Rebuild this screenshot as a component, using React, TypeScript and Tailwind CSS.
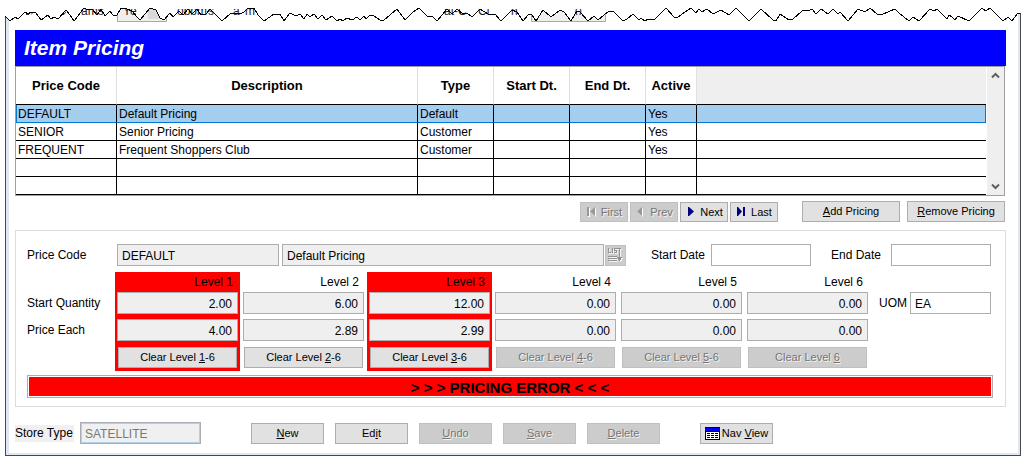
import React from "react";

const TEAR =
  "5,16 10,21 15,17 18,19 25,12 28,14 31,12 36,13 41,20 44,18 48,15 51,19 54,17 58,19 66,10 70,15 74,21 84,8 88,10 92,9 97,15 101,9 105,16 110,11 113,15 117,15 121,8 127,9 132,11 137,17 140,20 150,8 156,10 160,18 164,20 170,13 173,17 179,11 183,15 188,9 192,14 197,9 201,15 206,14 210,9 214,13 218,17 222,21 230,14 235,13 240,14 244,12 248,8 254,8 258,15 264,21 274,14 280,14 284,21 290,13 296,16 300,14 304,19 307,14 310,17 314,14 318,19 322,15 326,20 332,16 337,21 340,19 343,21 347,18 352,20 357,17 360,20 364,16 366,19 370,15 374,16 380,20 384,20 397,9 405,20 413,12 419,8 427,16 432,16 437,21 447,9 452,14 457,9 463,14 467,13 472,17 480,9 488,14 495,14 501,21 506,16 512,10 517,12 523,21 529,14 532,15 536,21 543,10 551,17 560,10 564,12 571,21 577,11 580,12 588,21 594,16 598,20 609,11 614,12 623,21 627,19 633,14 639,20 641,18 645,21 648,19 655,19 666,8 674,17 678,17 685,12 691,8 696,13 699,9 702,12 707,9 713,14 721,10 729,15 736,8 749,21 761,9 773,20 776,21 780,14 789,20 793,19 802,11 810,10 812,9 816,14 821,9 828,14 833,9 838,14 840,12 848,21 858,9 865,12 870,8 877,14 881,15 890,11 895,9 899,13 909,21 913,17 919,21 930,9 934,11 937,9 947,19 949,15 952,17 955,20 958,16 969,21 982,8 986,11 990,8 1003,21 1008,17 1012,21 1018,13 1020,13";

function TornEdge() {
  return (
    <svg viewBox="0 0 1029 22" preserveAspectRatio="none" className="block h-[22px] w-full" aria-hidden="true">
      <rect x="5" y="15" width="1" height="7" fill="#484848" />
      <rect x="6" y="15" width="3" height="7" fill="#dfe3f2" />
      <rect x="1018" y="13" width="2" height="9" fill="#dfe8f4" />
      <rect x="1020" y="13" width="1" height="9" fill="#484848" />
      <path d="M117.500 5V21.500H166.500V5" fill="#efefef" stroke="#a8a8ac" />
      <rect x="148" y="5" width="12" height="14" fill="#d9d9d9" />
      <g stroke="#333" fill="none">
        <path d="M26 14.500h3M31 14.500l3-3M61 14.500h3M64 14.500l2-3" />
      </g>
      <path d="M531.500 5V21.500H605.500V5" fill="#efefef" stroke="#a8a8ac" />
      <polygon points={`0,0 0,16 ${TEAR} 1020,0`} fill="#fff" />
      <g fontSize="12" fill="#222" clipPath="url(#fragments)">
        <text x="81" y="15">ams</text>
        <text x="123" y="15">Ye</text>
        <text x="177" y="15">oppm</text>
        <text x="208" y="15">s</text>
        <text x="233" y="15">a</text>
        <text x="245" y="15">m</text>
        <text x="444" y="15">at-C</text>
        <text x="478" y="15">Cl</text>
        <text x="511" y="15">n</text>
        <text x="575" y="16">0</text>
      </g>
      <clipPath id="fragments">
        <rect x="0" y="9" width="1029" height="6" />
      </clipPath>
      <polyline points={TEAR} fill="none" stroke="#000" strokeWidth="1" shapeRendering="crispEdges" />
    </svg>
  );
}

const rows = [
  ["DEFAULT", "Default Pricing", "Default", "", "", "Yes"],
  ["SENIOR", "Senior Pricing", "Customer", "", "", "Yes"],
  ["FREQUENT", "Frequent Shoppers Club", "Customer", "", "", "Yes"],
  ["", "", "", "", "", ""],
  ["", "", "", "", "", ""],
];

const headings = ["Price Code", "Description", "Type", "Start Dt.", "End Dt.", "Active"];

function Chevron({ down = false }: { down?: boolean }) {
  return (
    <svg width="9" height="7" viewBox="0 0 9 7" fill="none" stroke="#606060" strokeWidth="2" aria-hidden="true">
      <path d={down ? "M1 1.500L4.500 5L8 1.500" : "M1 5.500L4.500 2L8 5.500"} />
    </svg>
  );
}

function PricingTable() {
  return (
    <div className="mr-px flex border border-[#a0a0a0]">
      <table className="min-w-0 flex-1 table-fixed border-separate border-spacing-0 text-[12px] leading-4">
        <colgroup>
          <col className="w-[101px]" />
          <col className="w-[301px]" />
          <col className="w-[76px]" />
          <col className="w-[76px]" />
          <col className="w-[76px]" />
          <col className="w-[51px]" />
          <col />
        </colgroup>
        <thead>
          <tr className="h-[38px] text-[13px]">
            {headings.map((h) => (
              <th key={h} scope="col" className="border-r border-b border-r-[#e0e0e0] border-b-black p-0 text-center font-bold">
                {h}
              </th>
            ))}
            <td className="border-b border-black bg-[#efefef] p-0" />
          </tr>
        </thead>
        <tbody>
          {rows.map((r, i) => (
            <tr key={i} className={i === 0 ? "h-[18px] bg-[#a5cded]" : "h-[18px]"}>
              {r.map((c, j) => (
                <td
                  key={j}
                  className={
                    "border-r border-b border-r-black p-0 pt-px pl-[2px] whitespace-nowrap " +
                    (i === 0 ? "border-b-[#0078d7] first:border-l first:border-l-[#0078d7] first:pl-px" : "border-b-black")
                  }
                >
                  {c}
                </td>
              ))}
              <td className={i === 0 ? "border-r border-b border-[#0078d7] p-0" : "border-b border-black p-0"} />
            </tr>
          ))}
        </tbody>
      </table>
      <div className="flex w-[18px] flex-col justify-between border-l border-white bg-[#efefef]">
        <button type="button" aria-label="Scroll up" className="flex h-[17px] items-center justify-center">
          <Chevron />
        </button>
        <button type="button" aria-label="Scroll down" className="flex h-[17px] items-center justify-center">
          <Chevron down />
        </button>
      </div>
    </div>
  );
}

function Btn({ className, disabled, children }: { className: string; disabled?: boolean; children: React.ReactNode }) {
  return (
    <button
      type="button"
      disabled={disabled}
      className={
        "flex items-center justify-center border text-[11px] leading-[13px] whitespace-nowrap " +
        (disabled
          ? "border-[#bfbfbf] bg-[#cccccc] text-[#747474] text-shadow-[1px_1px_0_#f4f4f4] "
          : "border-[#adadad] bg-[#e1e1e1] text-black ") +
        className
      }
    >
      {children}
    </button>
  );
}

function NavIcon({ d, disabled }: { d: string; disabled?: boolean }) {
  return (
    <svg width="12" height="10" viewBox="0 0 12 10" aria-hidden="true">
      {disabled && <path d={d} fill="#fff" transform="translate(1 1)" />}
      <path d={d} fill={disabled ? "#989898" : "#000080"} />
    </svg>
  );
}

const FIRST = "M1 0H3V9H1ZM9 0V9L4 4.500Z";
const PREV = "M7 0V9L2 4.500Z";
const NEXT = "M3 0H4L9 4.500L4 9H3Z";
const LAST = "M1 0H2L6 4.500L2 9H1ZM7 0H9V9H7Z";

const field = "h-[22px] rounded-none border border-[#adadad] pt-px text-[12px] leading-[18px] outline-none ";

const levels = [
  { n: 1, qty: "2.00", price: "4.00", error: true },
  { n: 2, qty: "6.00", price: "2.89" },
  { n: 3, qty: "12.00", price: "2.99", error: true },
  { n: 4, qty: "0.00", price: "0.00", off: true },
  { n: 5, qty: "0.00", price: "0.00", off: true },
  { n: 6, qty: "0.00", price: "0.00", off: true },
];

function PricingForm() {
  return (
    <section className="mt-2 border border-[#dcdcdc] pt-[13px] pr-3 pb-2 pl-[11px] text-[12px] leading-[14px]">
      <div className="flex items-center pr-0.5">
        <label htmlFor="code" className="w-[90px] pb-px">Price Code</label>
        <input id="code" readOnly defaultValue="DEFAULT" className={field + "w-[162px] bg-[#efefef] pl-1"} />
        <input aria-label="Description" readOnly defaultValue="Default Pricing" className={field + "ml-[3px] min-w-0 flex-1 bg-[#efefef] pl-1"} />
        <button type="button" disabled aria-label="List" className="ml-px flex size-[21px] items-center justify-center border border-[#bfbfbf] bg-[#cccccc]">
          <svg width="15" height="15" viewBox="0 0 15 15" fill="none" shapeRendering="crispEdges" aria-hidden="true">
            {["#f4f4f4", "#929292"].map((c, i) => (
              <g key={c} stroke={c} transform={i === 0 ? "translate(1 1)" : undefined}>
                <path d="M.5 0V5M0 4.500H3M4.500 0V5M9 .5H6.500V2.500H8.500V4.500H6M9 .5H13M11.500 0V13M0 8.500H9M0 10.500H9M0 12.500H9" />
                <path d="M9 9.500H14M10 10.500H13M10 11.500H13" />
              </g>
            ))}
          </svg>
        </button>
        <label htmlFor="start" className="ml-[25px] w-[60px] pb-px">Start Date</label>
        <input id="start" className={field + "w-[100px] bg-white pl-1"} />
        <label htmlFor="end" className="ml-5 w-[60px] pb-px">End Date</label>
        <input id="end" className={field + "w-[100px] bg-white pl-1"} />
      </div>

      <div className="mt-[6px] flex pr-0.5">
        <div className="flex w-[88px] flex-col pt-6">
          <span className="h-[27px]">Start Quantity</span>
          <span>Price Each</span>
        </div>
        <div className="grid flex-1 grid-cols-6 gap-px">
          {levels.map((l) => (
            <div key={l.n} className={"flex flex-col px-0.5 pb-[3px] " + (l.error ? "bg-[#ff0000]" : "")}>
              <span className="pt-[3px] pr-[5px] pb-[3px] text-right">Level {l.n}</span>
              <input aria-label={`Start Quantity Level ${l.n}`} readOnly defaultValue={l.qty} className={field + "w-full bg-[#efefef] pr-[5px] text-right"} />
              <input aria-label={`Price Each Level ${l.n}`} readOnly defaultValue={l.price} className={field + "mt-[5px] w-full bg-[#efefef] pr-[5px] text-right"} />
              <Btn className="mx-px mt-[6px] h-[21px]" disabled={l.off}>
                <span>
                  Clear Level <u>{l.n}</u>
                  {l.n < 6 && "-6"}
                </span>
              </Btn>
            </div>
          ))}
        </div>
        <label htmlFor="uom" className="w-10 pt-6 pl-[9px]">UOM</label>
        <input id="uom" defaultValue="EA" className={field + "mt-5 w-[81px] bg-white pl-1"} />
      </div>

      <div className="mt-1 border border-[#adadad] p-px">
        <p role="alert" className="bg-[#ff0000] pt-0.5 text-center text-[15px] leading-[17px] font-bold">
          &gt; &gt; &gt; PRICING ERROR &lt; &lt; &lt;
        </p>
      </div>
    </section>
  );
}

export default function App() {
  return (
    <div className="bg-white pb-[6px] font-['Liberation_Sans',Arial,sans-serif] text-black">
      <TornEdge />
      <div className="mr-2 ml-[5px] border-x border-b border-[#484848]">
        <div className="border-r-2 border-b-2 border-l-3 border-[#dfe6f4] pt-2 pr-3 pb-[9px] pl-[6px]">
          <h1 className="h-9 bg-[#0000ff] pl-[9px] text-[21px] leading-9 font-bold text-white italic">Item Pricing</h1>
          <PricingTable />

          <div className="mt-[5px] mr-px flex items-end justify-end">
            <div className="flex gap-0.5">
              <Btn disabled className="h-5 w-12 gap-[3px]"><NavIcon d={FIRST} disabled />First</Btn>
              <Btn disabled className="h-5 w-12 gap-[3px]"><NavIcon d={PREV} disabled />Prev</Btn>
              <Btn className="h-5 w-12 gap-[3px]"><NavIcon d={NEXT} />Next</Btn>
              <Btn className="h-5 w-12 gap-[3px]"><NavIcon d={LAST} />Last</Btn>
            </div>
            <Btn className="ml-6 h-[21px] w-[98px]"><span><u>A</u>dd Pricing</span></Btn>
            <Btn className="ml-[7px] h-[21px] w-[98px]"><span><u>R</u>emove Pricing</span></Btn>
          </div>

          <PricingForm />

          <div className="mt-[15px] flex items-center">
            <label htmlFor="store" className="w-[59px] bg-[#f0f0f0] pt-px pb-px text-[12px] leading-[15px]">Store Type</label>
            <div className="ml-[6px] border border-[#a9adb5]">
              <input id="store" disabled defaultValue="SATELLITE" className="block h-5 w-[119px] border border-[#b5cfe7] bg-[#f0f0f0] pt-px pl-[3px] text-[12px] leading-4 text-[#787878]" />
            </div>
            <div className="ml-[50px] flex gap-[11px]">
              <Btn className="h-[21px] w-[73px]"><span><u>N</u>ew</span></Btn>
              <Btn className="h-[21px] w-[73px]"><span>Ed<u>i</u>t</span></Btn>
              <Btn disabled className="h-[21px] w-[73px]"><span><u>U</u>ndo</span></Btn>
              <Btn disabled className="h-[21px] w-[73px]"><span><u>S</u>ave</span></Btn>
              <Btn disabled className="h-[21px] w-[73px]"><span><u>D</u>elete</span></Btn>
            </div>
            <Btn className="ml-10 h-[21px] w-[73px] gap-0.5">
              <svg width="15" height="13" viewBox="0 0 15 13" shapeRendering="crispEdges" aria-hidden="true">
                <path fill="#000" d="M0 0H15V13H0Z" />
                <path fill="#0000ff" d="M0 1H15V4H0Z" />
                <path fill="#fff" d="M1 5H14V12H1Z" />
                <path stroke="#000" d="M2 6.500H5M6 6.500H9M10 6.500H13M2 8.500H5M6 8.500H9M10 8.500H13M2 10.500H5M6 10.500H9M10 10.500H13" />
              </svg>
              <span>Nav <u>V</u>iew</span>
            </Btn>
          </div>
        </div>
      </div>
    </div>
  );
}
